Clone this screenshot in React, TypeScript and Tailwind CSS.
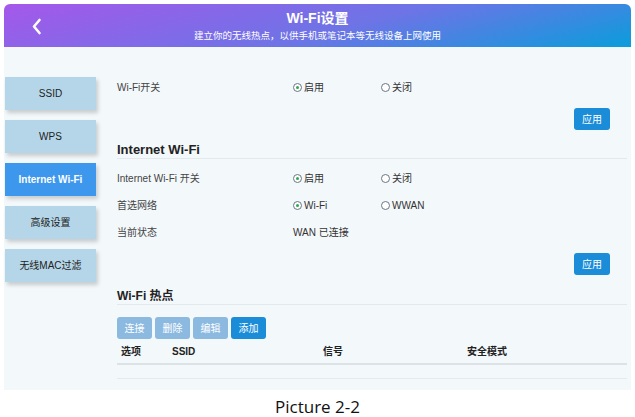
import React from 'react';

const font = { fontFamily: '"Liberation Sans", "Noto Sans CJK SC", sans-serif' };

const tabs = ['SSID', 'WPS', 'Internet Wi-Fi', '高级设置', '无线MAC过滤'];

const Radio: React.FC<{ checked?: boolean; label: string }> = ({ checked, label }) => (
  <span className="flex items-center gap-[2px] text-[10px] text-[#333]">
    <span className="flex h-[9px] w-[9px] items-center justify-center rounded-full border border-[#6b7785] bg-white">
      {checked && <span className="h-[3px] w-[3px] rounded-full bg-[#2fa84f]" />}
    </span>
    {label}
  </span>
);

const Row: React.FC<{ label: string; children: React.ReactNode }> = ({ label, children }) => (
  <div className="flex h-[27px] items-center text-[10px] text-[#444]">
    <div className="w-[176px]">{label}</div>
    {children}
  </div>
);

const ApplyBtn = () => (
  <div className="flex justify-end pr-[21px]">
    <button className="h-[22px] w-[36px] rounded-[3px] bg-[#1a8cd8] text-[10px] text-white">应用</button>
  </div>
);

export default function App() {
  return (
    <div className="h-[417px] w-[635px] bg-white" style={font}>
      <div className="mx-[4px] pt-[4px]">
        <div className="relative flex h-[43px] flex-col items-center justify-center gap-[2px] rounded-t-[6px] bg-[linear-gradient(165deg,#a558ea_0%,#6d74e6_55%,#0a9ddb_100%)] text-white">
          <svg className="absolute left-[27px] top-[14px]" width="11" height="17" viewBox="0 0 11 17">
            <path d="M8.5 2 L3 8.5 L8.5 15" fill="none" stroke="white" strokeWidth="2.6" strokeLinecap="round" strokeLinejoin="round" />
          </svg>
          <div className="text-[14px] font-bold leading-[17px]">Wi-Fi设置</div>
          <div className="text-[9.5px] leading-[13px]">建立你的无线热点，以供手机或笔记本等无线设备上网使用</div>
        </div>
        <div className="flex h-[343px] bg-[#f3f8fb]">
          <div className="flex w-[92px] flex-col gap-[10px] pl-[1px] pt-[30px]">
            {tabs.map((t, i) => (
              <div
                key={t}
                className={
                  i === 2
                    ? 'flex h-[33px] items-center justify-center bg-[#3d97ec] text-[10px] font-bold text-white shadow-[2px_3px_4px_rgba(0,0,0,0.18)]'
                    : 'flex h-[33px] items-center justify-center bg-[#b5d6e8] text-[10px] text-[#222] shadow-[2px_3px_4px_rgba(0,0,0,0.18)]'
                }
              >
                {t}
              </div>
            ))}
          </div>
          <div className="flex-1 pl-[21px] pt-[27px]">
            <Row label="Wi-Fi开关">
              <div className="w-[88px]"><Radio checked label="启用" /></div>
              <Radio label="关闭" />
            </Row>
            <div className="pt-[7px]"><ApplyBtn /></div>
            <div className="mt-[12px] mr-[4px] border-b border-[#e3e8ec] text-[13px] font-bold leading-[16px] text-[#222]">Internet Wi-Fi</div>
            <div className="pt-[6px]">
              <Row label="Internet Wi-Fi 开关">
                <div className="w-[88px]"><Radio checked label="启用" /></div>
                <Radio label="关闭" />
              </Row>
              <Row label="首选网络">
                <div className="w-[88px]"><Radio checked label="Wi-Fi" /></div>
                <Radio label="WWAN" />
              </Row>
              <Row label="当前状态">
                <span className="text-[10px] text-[#333]">WAN 已连接</span>
              </Row>
            </div>
            <div className="pt-[7px]"><ApplyBtn /></div>
            <div className="mt-[13px] mr-[4px] border-b border-[#e3e8ec] text-[12px] font-bold leading-[16px] text-[#222]">Wi-Fi 热点</div>
            <div className="mt-[12px] flex gap-[3px]">
              {['连接', '删除', '编辑'].map((b) => (
                <button key={b} className="h-[22px] w-[35px] rounded-[3px] bg-[#8bb9e0] text-[10px] text-white">{b}</button>
              ))}
              <button className="h-[22px] w-[35px] rounded-[3px] bg-[#1a8cd8] text-[10px] text-white">添加</button>
            </div>
            <div className="mr-[4px] flex h-[26px] items-center border-b-2 border-[#dde2e6] pl-[4px] text-[10px] font-bold text-[#222]">
              <div className="w-[51px]">选项</div>
              <div className="w-[151px]">SSID</div>
              <div className="w-[144px]">信号</div>
              <div>安全模式</div>
            </div>
            <div className="mr-[4px] h-[14px] border-b border-[#e6eaed]" />
          </div>
        </div>
      </div>
      <div className="mt-[6px] text-center text-[17px] leading-[22px] text-[#111]" style={{ fontFamily: '"Open Sans", "Liberation Sans", sans-serif' }}>
        Picture 2-2
      </div>
    </div>
  );
}
